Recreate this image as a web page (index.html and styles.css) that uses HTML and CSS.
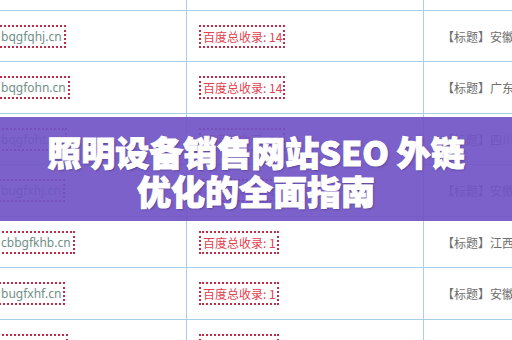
FILE: index.html
```html
<!DOCTYPE html>
<html lang="zh-CN">
<head>
<meta charset="utf-8">
<title>照明设备销售网站SEO 外链优化的全面指南</title>
<link rel="stylesheet" href="styles.css">
</head>
<body>
<div class="page">
  <div class="table">
    <div class="row tall"><div class="cell c1"></div><div class="cell c2"></div><div class="cell c3"></div></div>
    <div class="row short"><div class="cell c1"><span class="box dom">bqgfqhj.cn</span></div><div class="cell c2"><span class="box cnt">百度总收录: 14</span></div><div class="cell c3">【标题】安徽新能源汽车销售</div></div>
    <div class="row tall"><div class="cell c1"><span class="box dom">bqgfohn.cn</span></div><div class="cell c2"><span class="box cnt">百度总收录: 14</span></div><div class="cell c3">【标题】广东汽车配件销售</div></div>
    <div class="row short"><div class="cell c1"><span class="box dom">bqgfoht.cn</span></div><div class="cell c2"><span class="box cnt">百度总收录: 14</span></div><div class="cell c3">【标题】四川天然气设备</div></div>
    <div class="row tall"><div class="cell c1"><span class="box dom">bugfxhj.cn</span></div><div class="cell c2"><span class="box cnt">百度总收录: 1</span></div><div class="cell c3">【标题】安徽服装销售</div></div>
    <div class="row short"><div class="cell c1"><span class="box dom">cbbgfkhb.cn</span></div><div class="cell c2"><span class="box cnt">百度总收录: 1</span></div><div class="cell c3">【标题】江西镇江销售</div></div>
    <div class="row tall"><div class="cell c1"><span class="box dom">bugfxhf.cn</span></div><div class="cell c2"><span class="box cnt">百度总收录: 1</span></div><div class="cell c3">【标题】安徽镇江销售</div></div>
    <div class="row short"><div class="cell c1"><span class="box dom">bqgfxhk.cn</span></div><div class="cell c2"><span class="box cnt">百度总收录: 1</span></div><div class="cell c3">【标题】安徽销售</div></div>
  </div>
  <div class="banner">
    <h1 class="title">照明设备销售网站SEO 外链<br>优化的全面指南</h1>
  </div>
</div>
</body>
</html>
```
FILE: styles.css
```css
html, body {
  margin: 0;
  padding: 0;
  background: #ffffff;
}
.page {
  position: relative;
  width: 512px;
  height: 340px;
  overflow: hidden;
  font-family: "Noto Sans", "Noto Sans CJK SC", sans-serif;
}
.table {
  margin-top: -41px;
  display: flex;
  flex-direction: column;
}
.row {
  display: grid;
  grid-template-columns: 187px 237px 1fr;
  box-sizing: border-box;
  border-bottom: 1px solid #a9cfe8;
}
.row.tall { height: 52px; }
.row.short { height: 51px; }
.cell {
  display: flex;
  align-items: center;
  min-width: 0;
  overflow: hidden;
  white-space: nowrap;
}
.c1, .c2 {
  border-right: 1px solid #a9cfe8;
}
.c2 { padding-left: 12px; }
.c3 {
  padding-left: 18px;
  font-family: "Noto Sans CJK SC", sans-serif;
  font-size: 12px;
  color: #6e6e6e;
}
.box {
  display: inline-block;
  box-sizing: border-box;
  height: 23px;
  line-height: 19px;
  border: 2px dotted #c22b45;
  padding: 0 2px;
  font-size: 12px;
}
.dom {
  margin-left: -5px;
  padding-left: 4px;
  color: #6f8f8a;
  font-size: 12px;
}
.cnt {
  color: #e2414f;
  font-family: "Noto Sans CJK SC", sans-serif;
  padding: 0 1px 0 2px;
}
.banner {
  position: absolute;
  left: 0;
  top: 117px;
  width: 512px;
  height: 104px;
  background: rgba(112, 84, 196, 0.92);
  display: flex;
  align-items: center;
  justify-content: center;
}
.title {
  margin: 0;
  margin-top: 4px;
  font-family: "Noto Sans CJK SC", sans-serif;
  font-weight: 900;
  font-size: 34px;
  line-height: 39px;
  color: #ffffff;
  text-align: center;
  -webkit-text-stroke: 1px #ffffff;
  text-shadow: 1px 1px 2px rgba(40, 20, 80, 0.5);
}
```
